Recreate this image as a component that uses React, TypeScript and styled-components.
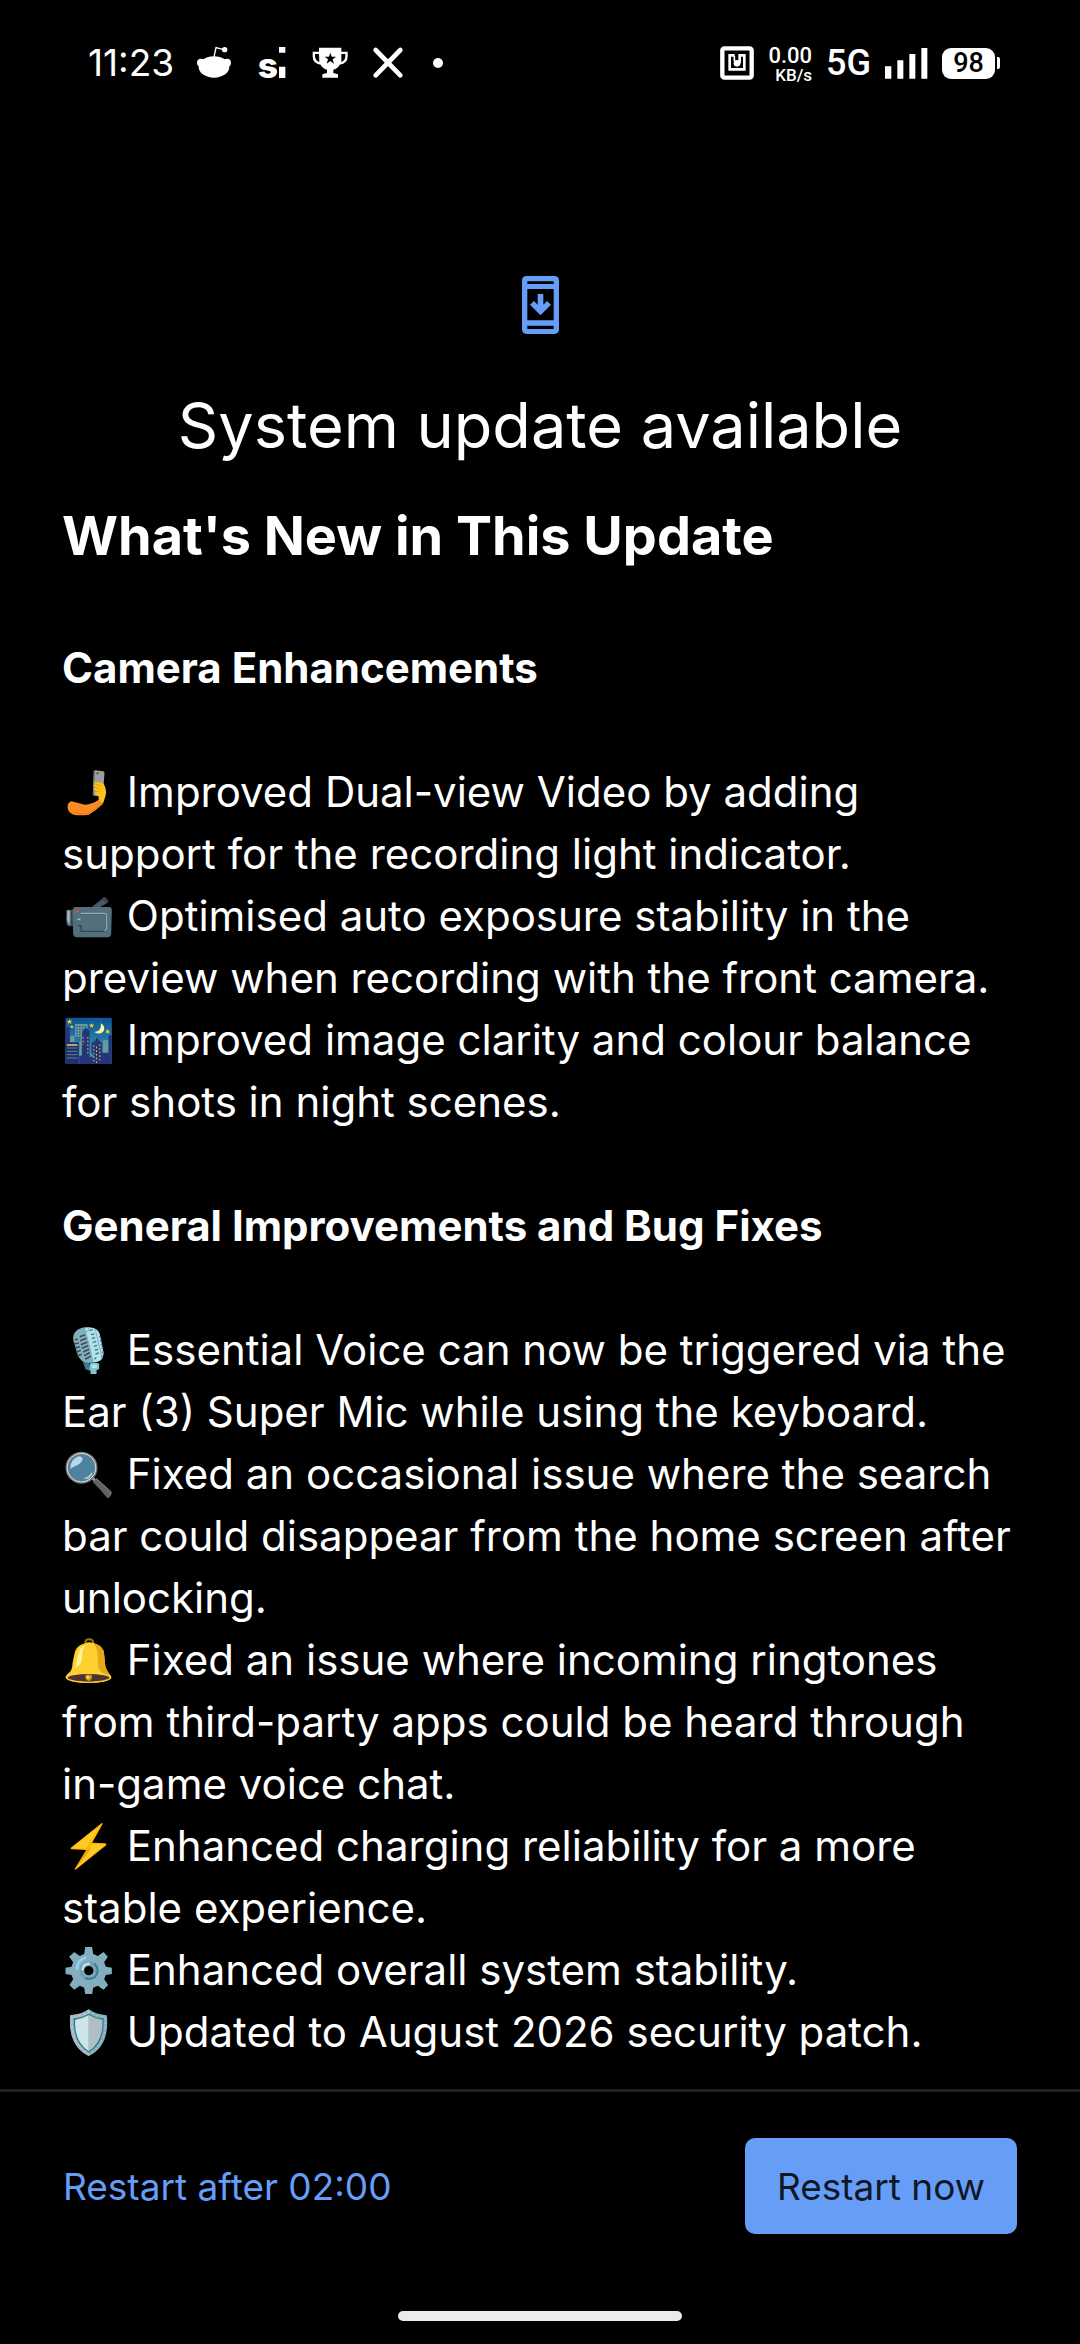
import React from 'react';
import styled, { createGlobalStyle } from 'styled-components';

const GlobalStyle = createGlobalStyle`
  * {
    box-sizing: border-box;
  }

  body {
    margin: 0;
    background: #000;
    color: #fff;
    font-family: Inter, 'Noto Sans', sans-serif;
  }
`;

// Styled components
const Screen = styled.div`
  display: flex;
  flex-direction: column;
  min-height: 100vh;
`;

const StatusBar = styled.header`
  display: flex;
  justify-content: space-between;
  align-items: center;
  height: 126px;
  padding: 0 80px 0 88px;
`;

const StatusGroup = styled.div<{ $gap: number }>`
  display: flex;
  align-items: center;
  gap: ${({ $gap }) => $gap}px;
`;

const Clock = styled.time`
  font-size: 37px;
  line-height: 40px;
`;

const NetSpeed = styled.div`
  display: flex;
  flex-direction: column;
  align-items: flex-end;
  padding-top: 4px;
  font-family: Roboto, sans-serif;
  font-weight: 500;
  font-size: 22px;
  line-height: 20px;
`;

const NetUnit = styled.span`
  font-size: 17px;
  line-height: 18px;
`;

const NetworkType = styled.span`
  font-family: Roboto, sans-serif;
  font-weight: 500;
  font-size: 36px;
  line-height: 40px;
`;

const Battery = styled.div`
  display: flex;
  align-items: center;
  gap: 2px;

  &::after {
    content: '';
    width: 3px;
    height: 12px;
    border-radius: 0 2px 2px 0;
    background: #fff;
  }
`;

const BatteryLevel = styled.span`
  width: 53px;
  border-radius: 9px;
  background: #fff;
  color: #000;
  font-family: Roboto, sans-serif;
  font-weight: 500;
  font-size: 27px;
  line-height: 31px;
  text-align: center;
`;

const Content = styled.main`
  flex: 1;
  padding: 150px 62px 26px;
`;

const TitleBlock = styled.div`
  display: flex;
  flex-direction: column;
  align-items: center;
  gap: 52px;
`;

const Title = styled.h1`
  margin: 0;
  font-weight: 400;
  font-size: 63px;
  line-height: 78px;
  text-align: center;
`;

const Subtitle = styled.h2`
  margin: 36px 0 65px;
  font-weight: 700;
  font-size: 54px;
  line-height: 72px;
`;

const Section = styled.section`
  font-size: 42px;
  line-height: 62px;

  & + & {
    margin-top: 62px;
  }
`;

const SectionTitle = styled.h3`
  margin: 0 0 62px;
  font-weight: 700;
  font-size: 42px;
`;

const NoteList = styled.ul`
  margin: 0;
  padding: 0;
  list-style: none;
`;

const Emoji = styled.svg`
  width: 53px;
  height: 48px;
  vertical-align: -9px;
`;

const Footer = styled.footer`
  display: flex;
  flex-direction: column;
  align-items: center;
  gap: 77px;
  padding: 46px 0 23px;
  border-top: 3px solid #222;
`;

const Actions = styled.div`
  display: flex;
  justify-content: space-between;
  align-items: center;
  width: 100%;
  padding: 0 63px;
`;

const ActionButton = styled.button<{ $primary?: boolean }>`
  height: 96px;
  padding: ${({ $primary }) => ($primary ? '0 32px' : '0')};
  border: none;
  border-radius: 10px;
  background: ${({ $primary }) => ($primary ? '#669df6' : 'transparent')};
  color: ${({ $primary }) => ($primary ? '#101828' : '#669df6')};
  font-family: inherit;
  font-size: 37px;
  cursor: pointer;
`;

const HomeIndicator = styled.div`
  width: 284px;
  height: 10px;
  border-radius: 5px;
  background: #ebebeb;
`;

const SiLogo = styled.svg`
  width: 36px;
  height: 36px;
  overflow: visible;
`;

// Status bar icons
const RedditIcon = () => (
  <svg width="36" height="36" viewBox="408 46 108 108" fill="#fff">
    <ellipse cx="462" cy="112" rx="46" ry="32" />
    <circle cx="423" cy="99" r="12" />
    <circle cx="501" cy="99" r="12" />
    <circle cx="494" cy="60" r="8" />
    <path d="M462 82L468 54L492 60" fill="none" stroke="#fff" strokeWidth="4" />
  </svg>
);

const SiIcon = () => (
  <SiLogo viewBox="583 46 108 108" fill="#fff">
    <text x="594" y="145" fontFamily="Inter, sans-serif" fontWeight="800" fontSize="106">s</text>
    <path d="M658 52h19v17h-19zM658 111h19v34h-19z" />
  </SiLogo>
);

const TrophyIcon = () => (
  <svg width="36" height="36" viewBox="755 46 108 108" fill="#fff">
    <path d="M776 54H843V66H862V80Q862 102 838 105Q833 116 819 120V130L833 134V144H786V134L800 130V120Q786 116 781 105Q757 102 757 80V66H776ZM776 73H764V80Q764 92 777 97ZM843 73V97Q855 92 855 80V73Z" fillRule="evenodd" />
    <path d="M810 69L814 81H827L817 89L821 102L810 94L799 102L803 89L793 81H806Z" fill="#000" />
  </svg>
);

const CrossIcon = () => (
  <svg width="36" height="36" viewBox="930 46 108 108">
    <path d="M947 61L1021 137M1021 61L947 137" stroke="#fff" strokeWidth="14" strokeLinecap="round" />
  </svg>
);

const DotIcon = () => (
  <svg width="22" height="36" viewBox="0 0 22 36">
    <circle cx="10" cy="18" r="5" fill="#fff" />
  </svg>
);

const NfcIcon = () => (
  <svg width="34" height="34" viewBox="60 48 102 102" fill="none" stroke="#fff">
    <rect x="67" y="55" width="88" height="88" rx="6" strokeWidth="13" />
    <path d="M104 76H89V118H133V76H119V100" strokeWidth="8" />
    <path d="M103 78V94" strokeWidth="5" />
    <circle cx="111" cy="100" r="10" fill="#fff" stroke="none" />
  </svg>
);

const SignalIcon = () => (
  <svg width="43" height="31" viewBox="557 53 129 93" fill="#fff">
    <path d="M557 108h19v37h-19zM594 90h18v55h-18zM630 71h18v74h-18zM666 53h18v92h-18z" />
  </svg>
);

const UpdateIcon = () => (
  <svg width="37" height="58" viewBox="93 47 111 174" fill="#669df6">
    <path
      fillRule="evenodd"
      d="M107 47H190Q204 47 204 61V207Q204 221 190 221H107Q93 221 93 207V61Q93 47 107 47ZM109 63V71H188V63ZM109 86V180H188V86ZM109 196V206H188V196Z"
    />
    <path d="M140 101H157V133L168 122L180 133L148.500 165L117 133L129 122L140 133Z" />
  </svg>
);

// Emoji
const SelfieEmoji = () => (
  <Emoji viewBox="39 53 156 144" aria-hidden="true">
    <path d="M137 60L161 63Q165 64 165 68L160 136Q159 139 155 138L134 136Q130 135 130 131L133 63Q133 60 137 60Z" fill="#9e9e9e" />
    <path d="M137 60L133 63L130 132L134 136Z" fill="#757575" />
    <circle cx="144" cy="69" r="3" fill="#424242" />
    <path d="M66 153Q54 156 54 171Q56 188 72 193Q94 196 118 193Q139 181 160 161L148 148Q128 162 106 163Z" fill="#f88c20" />
    <path d="M59 183Q84 194 115 190L158 160" fill="none" stroke="#ed771e" strokeWidth="3" />
    <path d="M135 94Q131 98 138 101L149 105L135 102Q129 106 136 110L147 114L134 113Q130 119 137 121L146 124L138 124Q132 129 142 134L147 138L148 150L160 161Q165 147 168 136Q172 126 167 111Q164 98 156 97Z" fill="#fcc21b" />
    <path d="M138 101L155 107M136 111L153 116M137 122L150 125" stroke="#e59600" strokeWidth="2" />
  </Emoji>
);

const CameraEmoji = () => (
  <Emoji viewBox="39 425 156 144" aria-hidden="true">
    <path d="M126 471L161 443L172 459L148 472Z" fill="#455a64" />
    <path d="M156 446L164 439Q175 444 177 455L169 462Q166 451 156 446Z" fill="#37474f" />
    <path d="M51 481Q49 479 54 478H74V528H57Q51 526 51 519Z" fill="#37474f" />
    <path d="M52 480H63V526Q52 524 51 505Z" fill="#78909c" />
    <path d="M57 482V514" stroke="#a9c5d1" strokeWidth="5" />
    <path d="M78 470H179Q187 471 187 481L185 550Q184 560 175 561H82Q72 560 71 550L69 480Q70 471 78 470Z" fill="#546e7a" />
    <path d="M93 490H164Q170 490 170 498V534Q169 543 162 543H95V526H85" fill="none" stroke="#2f444e" strokeWidth="4" />
    <path d="M93 489H163Q171 489 171 497V534Q170 540 164 541" fill="none" stroke="#82aec0" strokeWidth="4" />
    <path d="M84 507H93" stroke="#82c0d8" strokeWidth="5" />
    <circle cx="83" cy="483" r="4" fill="#f44336" />
  </Emoji>
);

const NightEmoji = () => (
  <Emoji viewBox="39 797 156 144" aria-hidden="true">
    <defs>
      <linearGradient id="nightSky" x1="0" y1="0" x2="0" y2="1">
        <stop offset="0" stopColor="#0d5593" />
        <stop offset="1" stopColor="#3fa2b4" />
      </linearGradient>
    </defs>
    <rect x="48" y="802" width="139" height="139" rx="5" fill="url(#nightSky)" />
    <path d="M77 821H114V915H90V860H77ZM62 856H75V882H62ZM161 870H177V910H161Z" fill="#659ca2" />
    <path d="M83 827v35M91 827v46M99 827v15M107 827v10" stroke="#244f7a" strokeWidth="4" strokeDasharray="4 4" />
    <path d="M48 831H61V880H48ZM98 843L109 831L120 843V919H135L126 908V878L137 871L143 860L149 871L158 878V907H177V855H187V937Q187 941 183 941H89V916H97V862H98Z" fill="#263579" />
    <path d="M48 876H88V941H53Q48 941 48 936Z" fill="#22306a" />
    <path d="M52 884H84" stroke="#ffe36c" strokeWidth="4" />
    <path d="M52 893H84M52 903H84M52 913H84M52 923H84" stroke="#657d99" strokeWidth="3" />
    <path d="M101 860v24M115 860v50M133 885v48M141 889v49M151 882v48" stroke="#dfbc50" strokeWidth="3" strokeDasharray="5 6" />
    <path d="M154 819Q168 827 163 841Q153 856 134 845Q157 844 154 819Z" fill="#fff6a5" />
    <path d="M60 806l2 5 6-1-4 5 2 5-6-2-4 3v-6l-4-3 6-1zM67 823l1 4 4-1-2 4 2 4-5-2-3 2v-4l-3-2 5-1zM127 818l1 5 6-1-4 5 1 5-5-3-4 3 1-5-4-4 6-1zM175 836l1 5 6-1-4 4 2 6-5-3-5 3 1-6-3-3 5-1z" fill="#fdc82f" />
  </Emoji>
);

const MicEmoji = () => (
  <Emoji viewBox="39 47 156 144" aria-hidden="true">
    <path d="M100 155L119 157L121 182L108 177Z" fill="#387e91" />
    <path d="M121 160Q133 153 149 160V176L141 180V192H123V181L119 176Z" fill="#82c5d1" />
    <path d="M127 163H142V173H127Z" fill="#b9e4ea" />
    <path d="M71 88Q70 56 106 51Q143 47 151 71L162 127Q163 154 132 156Q96 164 85 134Z" fill="#82aec0" />
    <path d="M107 52Q143 47 150 71L162 127Q163 153 132 156L119 100Z" fill="#b3e1e9" />
    <path d="M76 89L85 86M74 101L88 98M77 113L91 109M80 126L94 120M83 137L97 132M91 79L107 73M92 91L112 83M94 103L116 94M97 114L119 105M101 125L122 115M104 136L124 125M107 147L126 136" stroke="#424c55" strokeWidth="5" />
    <path d="M120 61L130 58M124 73L134 71M127 84L137 82M130 96L140 93M133 108L143 105M136 119L146 117M138 131L148 128M135 147L140 141M149 80L153 79M151 92L156 90M154 103L159 102M156 114L161 113M157 126L162 125M155 141L161 136" stroke="#397f88" strokeWidth="4" />
    <path d="M92 61Q96 68 107 67L119 61L117 53M108 67L130 155M137 57L157 139" fill="none" stroke="#79b6c2" strokeWidth="3" />
  </Emoji>
);

const SearchEmoji = () => (
  <Emoji viewBox="39 419 156 144" aria-hidden="true">
    <path d="M126 500L138 512" stroke="#9e9e9e" strokeWidth="9" />
    <path d="M130 515L141 504Q164 525 186 545Q188 557 174 564Q153 538 130 515Z" fill="#616161" />
    <path d="M141 505L184 544Q183 552 178 553" fill="none" stroke="#858585" strokeWidth="3" />
    <circle cx="96" cy="472" r="44" fill="#4e83a0" stroke="#757575" strokeWidth="8" />
    <circle cx="96" cy="472" r="43" fill="none" stroke="#e0e0e0" strokeWidth="3" />
    <path d="M63 477Q60 448 87 438Q101 438 99 449Q92 463 75 468Q67 472 63 477Z" fill="#b9d7e5" />
    <path d="M102 503Q121 500 126 486Q133 491 119 504Q110 509 102 503Z" fill="#a5cee0" />
  </Emoji>
);

const BellEmoji = () => (
  <Emoji viewBox="39 18 156 144" aria-hidden="true">
    <path d="M108 43V35Q109 28 119 28Q130 28 131 36V43" fill="none" stroke="#a07415" strokeWidth="6" />
    <path d="M107 40Q119 34 133 40Q155 45 163 64L167 105Q168 118 186 141Q182 158 117 159Q52 158 48 141Q49 137 60 127Q69 118 69 100L76 66Q83 45 107 40Z" fill="#fdcf2f" />
    <path d="M133 40Q155 45 163 64L167 105Q168 118 184 137L168 132Q146 126 145 102Q148 60 133 40Z" fill="#e6a817" />
    <path d="M98 50Q88 57 83 88L77 113Q97 108 98 78Q98 59 106 49Z" fill="#fff59a" />
    <ellipse cx="117" cy="144" rx="63" ry="12" fill="#4e342e" />
    <path d="M107 137Q117 130 128 137Q127 151 118 153Q108 150 107 137Z" fill="#d49a16" />
    <circle cx="115" cy="142" r="4" fill="#ffe36c" />
    <path d="M50 143Q58 155 117 157Q176 155 184 143" fill="none" stroke="#fdc82f" strokeWidth="4" />
  </Emoji>
);

const BoltEmoji = () => (
  <Emoji viewBox="39 576 156 144" aria-hidden="true">
    <path d="M157 579L64 653Q62 658 67 658L110 660L76 716Q75 721 80 718L170 646Q172 640 166 640L128 638L159 583Q160 578 157 579Z" fill="#feb804" />
    <path d="M151 588L68 654L111 656L120 636ZM121 662L78 716L166 644L128 643Z" fill="#ffca28" />
    <path d="M111 660L123 654L103 684L78 717Z" fill="#f29d17" />
  </Emoji>
);

const GearEmoji = () => (
  <Emoji viewBox="39 948 156 144" aria-hidden="true">
    <path
      fillRule="evenodd"
      fill="#82aec0"
      d="M107 951H128L131 972L145 978L162 966L175 980L164 997L169 1010L187 1013V1032L169 1035L164 1048L176 1065L162 1079L145 1067L131 1073L128 1092H107L104 1073L91 1067L74 1079L60 1065L71 1048L66 1035L48 1032V1013L66 1010L71 997L59 980L74 966L91 978L104 972ZM118 1008A14 14 0 1 0 118 1036A14 14 0 1 0 118 1008Z"
    />
    <path d="M83 1017Q83 991 107 983" fill="none" stroke="#92d5e5" strokeWidth="8" strokeLinecap="round" />
    <circle cx="118" cy="1022" r="23" fill="none" stroke="#75a0b1" strokeWidth="10" />
    <path d="M99 1018Q102 1002 118 1001" fill="none" stroke="#b9e4ea" strokeWidth="7" strokeLinecap="round" />
    <path d="M136 1001Q151 1019 139 1038Q128 1051 108 1045" fill="none" stroke="#347b8e" strokeWidth="5" strokeLinecap="round" />
  </Emoji>
);

const ShieldEmoji = () => (
  <Emoji viewBox="39 1134 156 144" aria-hidden="true">
    <path d="M118 1138Q141 1154 172 1156Q181 1248 118 1278Q55 1248 62 1156Q95 1154 118 1138Z" fill="#82aec0" />
    <path d="M118 1138Q95 1154 62 1156Q55 1248 118 1278L118 1268Q67 1239 72 1164Q98 1162 118 1150Z" fill="#a4b8c3" />
    <path d="M118 1151Q138 1163 162 1165Q167 1239 118 1268Q69 1239 73 1165Q98 1163 118 1151Z" fill="#2f7889" />
    <path d="M118 1155Q98 1166 77 1169Q73 1234 118 1264Z" fill="#cde4e8" />
    <path d="M118 1155Q138 1166 159 1169Q162 1234 118 1264Z" fill="#b0bec5" />
    <path d="M118 1145Q139 1157 167 1160Q173 1241 118 1273Q63 1241 67 1160Q97 1158 118 1145Z" fill="none" stroke="#dbe7ec" strokeWidth="3" strokeLinecap="round" strokeDasharray="1 13" />
  </Emoji>
);

interface Note {
  icon: React.FC;
  text: string;
}

interface NoteSection {
  title: string;
  notes: Note[];
}

const sections: NoteSection[] = [
  {
    title: 'Camera Enhancements',
    notes: [
      { icon: SelfieEmoji, text: 'Improved Dual-view Video by adding support for the recording light indicator.' },
      { icon: CameraEmoji, text: 'Optimised auto exposure stability in the preview when recording with the front camera.' },
      { icon: NightEmoji, text: 'Improved image clarity and colour balance for shots in night scenes.' },
    ],
  },
  {
    title: 'General Improvements and Bug Fixes',
    notes: [
      { icon: MicEmoji, text: 'Essential Voice can now be triggered via the Ear (3) Super Mic while using the keyboard.' },
      { icon: SearchEmoji, text: 'Fixed an occasional issue where the search bar could disappear from the home screen after unlocking.' },
      { icon: BellEmoji, text: 'Fixed an issue where incoming ringtones from third-party apps could be heard through in-game voice chat.' },
      { icon: BoltEmoji, text: 'Enhanced charging reliability for a more stable experience.' },
      { icon: GearEmoji, text: 'Enhanced overall system stability.' },
      { icon: ShieldEmoji, text: 'Updated to August 2026 security patch.' },
    ],
  },
];

const App: React.FC = () => {
  return (
    <Screen>
      <GlobalStyle />
      <StatusBar>
        <StatusGroup $gap={22}>
          <Clock>11:23</Clock>
          <RedditIcon />
          <SiIcon />
          <TrophyIcon />
          <CrossIcon />
          <DotIcon />
        </StatusGroup>
        <StatusGroup $gap={14}>
          <NfcIcon />
          <NetSpeed>
            0.00
            <NetUnit>KB/s</NetUnit>
          </NetSpeed>
          <NetworkType>5G</NetworkType>
          <SignalIcon />
          <Battery>
            <BatteryLevel>98</BatteryLevel>
          </Battery>
        </StatusGroup>
      </StatusBar>

      <Content>
        <TitleBlock>
          <UpdateIcon />
          <Title>System update available</Title>
        </TitleBlock>
        <Subtitle>What's New in This Update</Subtitle>
        {sections.map(({ title, notes }) => (
          <Section key={title}>
            <SectionTitle>{title}</SectionTitle>
            <NoteList>
              {notes.map(({ icon: Icon, text }) => (
                <li key={text}>
                  <Icon /> {text}
                </li>
              ))}
            </NoteList>
          </Section>
        ))}
      </Content>

      <Footer>
        <Actions>
          <ActionButton type="button">Restart after 02:00</ActionButton>
          <ActionButton type="button" $primary>Restart now</ActionButton>
        </Actions>
        <HomeIndicator />
      </Footer>
    </Screen>
  );
};

export default App;
